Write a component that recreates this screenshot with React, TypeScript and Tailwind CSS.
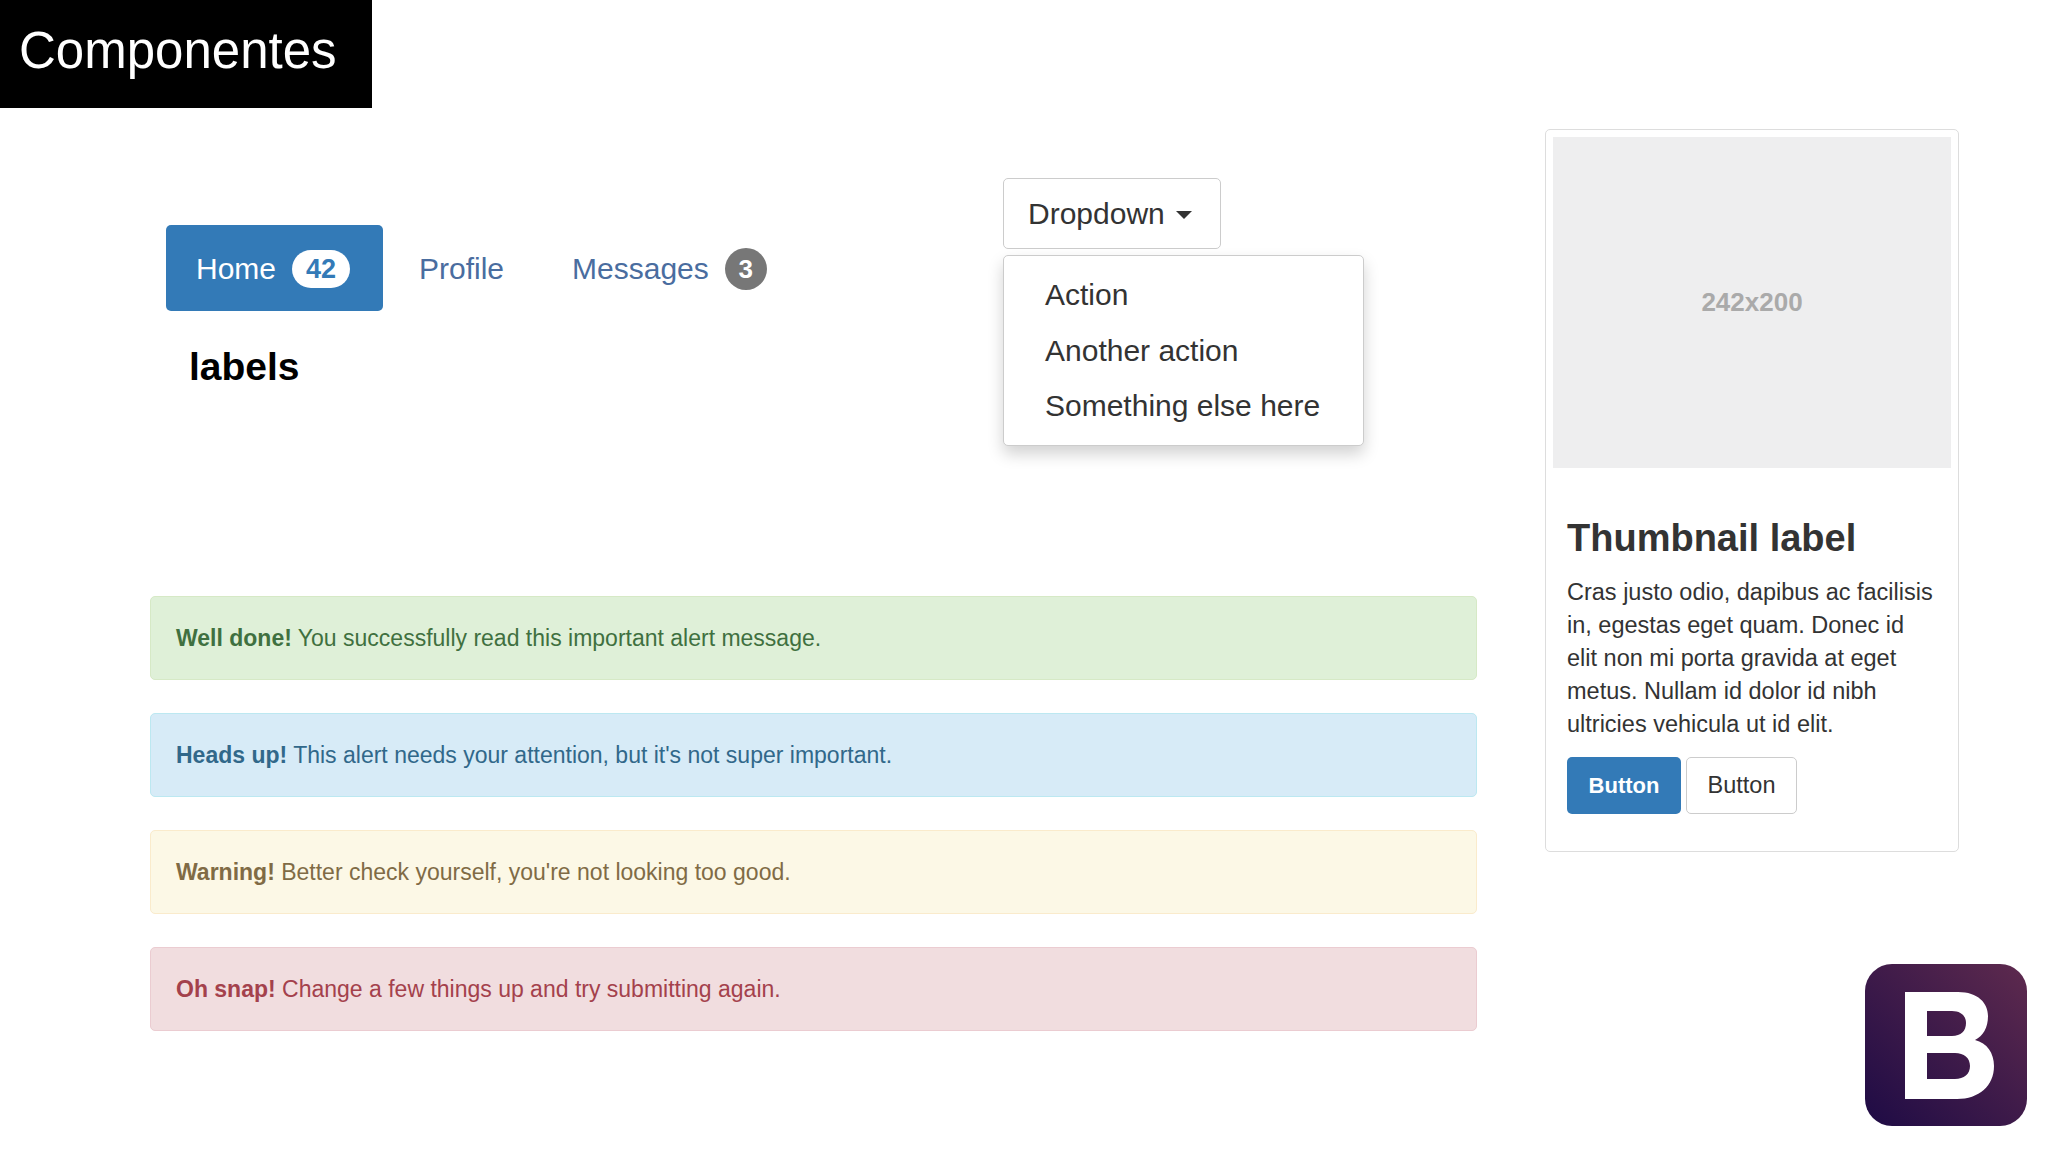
const alerts = [
  { title: "Well done!", text: "You successfully read this important alert message.", box: "bg-[#dff0d8] border-[#d6e9c6] text-[#3f7040]" },
  { title: "Heads up!", text: "This alert needs your attention, but it's not super important.", box: "bg-[#d7ebf7] border-[#bce8f1] text-[#31688a]" },
  { title: "Warning!", text: "Better check yourself, you're not looking too good.", box: "bg-[#fcf8e6] border-[#faebcc] text-[#806b45]" },
  { title: "Oh snap!", text: "Change a few things up and try submitting again.", box: "bg-[#f1dddf] border-[#ebccd1] text-[#a4414c]" },
];

const BootstrapLogo = () => (
  <svg viewBox="0 0 162 162" className="h-[162px] w-[162px] self-end">
    <defs>
      <linearGradient id="logoBg" x1="0" y1="1" x2="1" y2="0">
        <stop offset="0" stopColor="#1e0b45" />
        <stop offset="1" stopColor="#5e2a4e" />
      </linearGradient>
    </defs>
    <rect width="162" height="162" rx="27" fill="url(#logoBg)" />
    <path
      fillRule="evenodd"
      fill="#fff"
      d="M40 28H93C113 28 123 39 123 52C123 64 118 72 110 76C122 79 129 89 129 102C129 122 114 135 92 135H40ZM62 47V72H87C96 72 101 67 101 59C101 52 96 47 87 47ZM62 89V115H90C99 115 105 110 105 102C105 94 99 89 90 89Z"
    />
  </svg>
);

export default function App() {
  return (
    <div className="h-[1152px] w-full overflow-hidden bg-white [font-family:'Liberation_Sans',Arial,sans-serif]">
      {/* Slide title */}
      <div className="flex h-[108px] w-[372px] bg-black pl-[19px] pt-[21px]">
        <h1 className="text-[51px] leading-[60px] text-white">Componentes</h1>
      </div>

      <div className="mt-[21px] flex pl-[150px]">
        <div className="w-[1327px]">
          <div className="flex h-[467px]">
            {/* Nav pills */}
            <div className="w-[853px] pl-[16px] pt-[96px]">
              <nav className="flex items-center text-[30px] text-[#4a6d9f]">
                <a className="flex h-[86px] w-[217px] items-center rounded-[5px] bg-[#337ab7] pl-[30px] text-white">
                  Home
                  <span className="ml-[16px] mt-[2px] flex h-[38px] w-[58px] items-center justify-center rounded-[19px] bg-white text-[27px] font-bold text-[#337ab7]">42</span>
                </a>
                <a className="ml-[36px]">Profile</a>
                <a className="ml-[68px]">Messages</a>
                <span className="ml-[16px] mt-[2px] flex h-[42px] w-[42px] items-center justify-center rounded-full bg-[#777] text-[26px] font-bold text-white">3</span>
              </nav>
              <p className="mt-[33px] pl-[23px] text-[39px] font-bold leading-[46px] text-black">labels</p>
            </div>

            {/* Dropdown */}
            <div className="pt-[49px]">
              <button className="flex h-[71px] w-[218px] items-center rounded-[5px] border border-[#ccc] bg-white pl-[24px] text-[30px] text-[#333]">
                Dropdown
                <span className="ml-[11px] mt-[3px] h-0 w-0 border-x-[8px] border-t-[8px] border-x-transparent border-t-[#333]" />
              </button>
              <ul className="mt-[6px] h-[191px] w-[361px] rounded-[5px] border border-[#ccc] bg-white pl-[41px] pt-[11px] text-[30px] leading-[55.5px] text-[#333] shadow-[0_8px_16px_rgba(0,0,0,0.18)]">
                <li>Action</li>
                <li>Another action</li>
                <li>Something else here</li>
              </ul>
            </div>
          </div>

          {/* Alerts */}
          <div className="flex flex-col gap-[33px]">
            {alerts.map((a) => (
              <div key={a.title} className={`flex h-[84px] items-center rounded-[5px] border pl-[25px] text-[23px] ${a.box}`}>
                <p>
                  <strong>{a.title}</strong> {a.text}
                </p>
              </div>
            ))}
          </div>
        </div>

        {/* Thumbnail card and logo */}
        <div className="ml-[68px] flex w-[482px] flex-col">
          <div className="h-[723px] w-[414px] rounded-[5px] border border-[#ddd] px-[7px] pt-[7px]">
            <div className="flex h-[331px] items-center justify-center bg-[#eeeeef] text-[26px] font-bold text-[#aaaaaa]">242x200</div>
            <div className="pl-[14px] pr-[12px] pt-[48px]">
              <h3 className="text-[38px] font-bold leading-[44px] text-[#333]">Thumbnail label</h3>
              <p className="mt-[16px] text-[23.5px] leading-[33px] text-[#333]">
                Cras justo odio, dapibus ac facilisis in, egestas eget quam. Donec id elit non mi porta gravida at eget metus. Nullam id dolor id nibh ultricies vehicula ut id elit.
              </p>
              <div className="mt-[16px] flex gap-[5px]">
                <button className="h-[57px] w-[114px] rounded-[5px] bg-[#337ab7] text-[22px] font-bold text-white">Button</button>
                <button className="h-[57px] w-[111px] rounded-[5px] border border-[#ccc] bg-white text-[23.5px] text-[#333]">Button</button>
              </div>
            </div>
          </div>
          <div className="mt-[112px] flex justify-end">
            <BootstrapLogo />
          </div>
        </div>
      </div>
    </div>
  );
}
